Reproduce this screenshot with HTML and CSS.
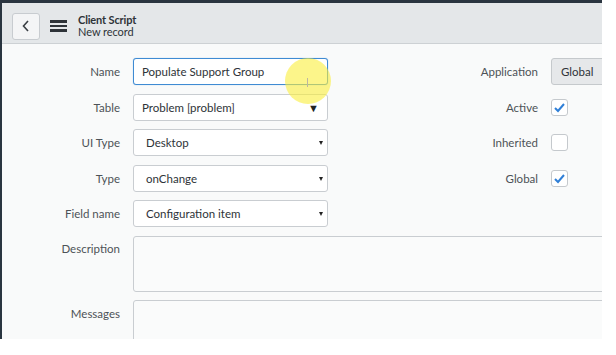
FILE: index.html
```
<!DOCTYPE html>
<html>
<head>
<meta charset="utf-8">
<link rel="stylesheet" href="styles.css">
</head>
<body>
<div class="frame">
  <div class="app">
    <header class="header">
      <button class="back" aria-label="Back">
        <svg width="10" height="14" viewBox="0 0 10 14"><path d="M7 2 L2.5 7 L7 12" fill="none" stroke="#3a3f44" stroke-width="1.6"/></svg>
      </button>
      <div class="burger"><span></span><span></span><span></span></div>
      <div class="titles">
        <div class="t1">Client Script</div>
        <div class="t2">New record</div>
      </div>
    </header>
    <main class="form">
      <div class="grid">
        <label class="lbl">Name</label>
        <div class="field input focus">Populate Support Group</div>
        <label class="lbl">Application</label>
        <div class="field readonly">Global</div>

        <label class="lbl">Table</label>
        <div class="field input select">Problem [problem]<span class="big-arrow">▼</span></div>
        <label class="lbl">Active</label>
        <div class="cbcell"><span class="cb checked"><svg width="13" height="11" viewBox="0 0 13 11"><path d="M2 6 L5 9 L11 2" fill="none" stroke="#2f7fd7" stroke-width="2"/></svg></span></div>

        <label class="lbl">UI Type</label>
        <div class="field input select pad">Desktop<span class="sm-arrow"></span></div>
        <label class="lbl">Inherited</label>
        <div class="cbcell"><span class="cb"></span></div>

        <label class="lbl">Type</label>
        <div class="field input select pad">onChange<span class="sm-arrow"></span></div>
        <label class="lbl">Global</label>
        <div class="cbcell"><span class="cb checked"><svg width="13" height="11" viewBox="0 0 13 11"><path d="M2 6 L5 9 L11 2" fill="none" stroke="#2f7fd7" stroke-width="2"/></svg></span></div>

        <label class="lbl">Field name</label>
        <div class="field input select pad">Configuration item<span class="sm-arrow"></span></div>
        <div></div><div></div>
      </div>
      <div class="area-row">
        <label class="lbl top">Description</label>
        <div class="textarea desc"></div>
      </div>
      <div class="area-row">
        <label class="lbl top msg">Messages</label>
        <div class="textarea msgs"></div>
      </div>
    </main>
    <div class="cursor-hl"></div>
    <div class="ibeam"></div>
  </div>
</div>
</body>
</html>
```
FILE: styles.css
```
* { box-sizing: border-box; }
html, body { margin: 0; background: #ffffff; }
body { font-family: Lato, "Open Sans", sans-serif; }
.frame {
  width: 602px;
  height: 339px;
  background: #2a3540;
  padding: 3px 0 0 2px;
}
.app {
  position: relative;
  width: 600px;
  height: 336px;
  background: #f9fafa;
  overflow: hidden;
}
.header {
  height: 41px;
  background: #e4e7e9;
  border-bottom: 1px solid #cdd1d4;
  display: flex;
  align-items: center;
  padding-left: 10px;
}
.back {
  width: 28px;
  height: 27px;
  border: 1px solid #c8ccd0;
  border-radius: 3px;
  background: #f4f5f6;
  display: flex;
  align-items: center;
  justify-content: center;
  padding: 0;
  margin-top: 6px;
}
.burger {
  margin-left: 10px;
  margin-top: 6px;
  width: 17px;
  display: flex;
  flex-direction: column;
  gap: 2px;
}
.burger span { display: block; height: 2.7px; background: #2e3338; }
.titles {
  margin-left: 11px;
  margin-top: 6px;
  color: #2e3338;
  font-size: 11px;
  line-height: 12px;
}
.t1 { font-weight: 700; letter-spacing: -0.15px; }
.t2 { letter-spacing: -0.05px; }
.form { padding-top: 14px; }
.grid {
  display: grid;
  grid-template-columns: 118px 195px 197px 90px;
  grid-template-rows: repeat(5, 27px);
  column-gap: 13px;
  row-gap: 8.5px;
  align-items: center;
}
.lbl {
  text-align: right;
  font-size: 11.5px;
  color: #4d5257;
}
.field {
  height: 27px;
  border: 1px solid #c9cdd1;
  border-radius: 3px;
  background: #ffffff;
  font-size: 11.5px;
  color: #2e3338;
  display: flex;
  align-items: center;
  padding-left: 8px;
  position: relative;
  white-space: nowrap;
}
.field.pad { padding-left: 12px; }
.field.focus { border-color: #3f8bd3; box-shadow: 0 0 1px #7fb3e3; }
.readonly {
  background: #e6e8ea;
  border-color: #c5c9cc;
  padding-left: 9px;
  width: 90px;
}
.big-arrow {
  position: absolute;
  right: 8px;
  top: 6px;
  font-size: 11px;
  color: #222;
}
.sm-arrow {
  position: absolute;
  right: 4px;
  top: 11px;
  width: 0; height: 0;
  border-left: 2.5px solid transparent;
  border-right: 2.5px solid transparent;
  border-top: 4.5px solid #222;
}
.cbcell { display: flex; align-items: center; }
.cb {
  width: 17px;
  height: 17px;
  border: 1px solid #c5c9cd;
  border-radius: 3px;
  background: #ffffff;
  display: flex;
  align-items: center;
  justify-content: center;
}
.area-row {
  display: flex;
  column-gap: 13px;
  margin-top: 8.5px;
}
.area-row .lbl { width: 118px; flex: none; }
.lbl.top { padding-top: 6px; }
.lbl.msg { padding-top: 7px; }
.textarea {
  flex: none;
  width: 480px;
  border: 1px solid #c9cdd1;
  border-radius: 3px;
  background: #fafbfb;
}
.desc { height: 56px; }
.msgs { height: 50px; }
.cursor-hl {
  position: absolute;
  left: 283px;
  top: 55px;
  width: 46px;
  height: 46px;
  border-radius: 50%;
  background: rgba(250, 238, 60, 0.6);
}
.ibeam {
  position: absolute;
  left: 305px;
  top: 75px;
  width: 1px;
  height: 9px;
  background: #bdb6a0;
}
```
